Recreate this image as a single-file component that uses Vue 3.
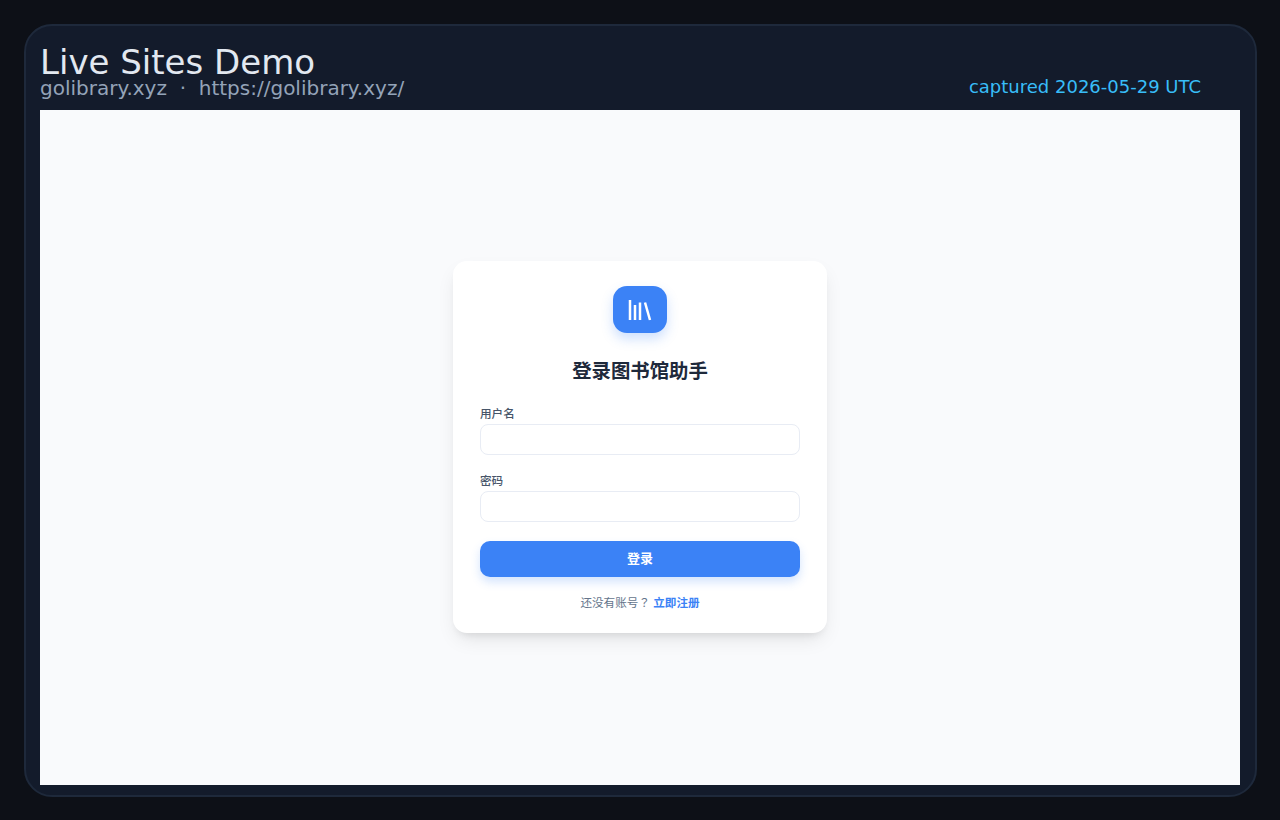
<template>
  <div class="page">
    <div class="frame">
      <header class="head">
        <div class="head__left">
          <h1 class="head__title">Live Sites Demo</h1>
          <p class="head__sub">golibrary.xyz &nbsp;·&nbsp; https://golibrary.xyz/</p>
        </div>
        <span class="head__stamp">captured 2026-05-29 UTC</span>
      </header>

      <main class="shot">
        <form class="card" @submit.prevent>
          <div class="card__logo">
            <svg width="30" height="30" viewBox="0 0 24 24" fill="none" stroke="#fff" stroke-width="2" stroke-linecap="butt" stroke-linejoin="round">
              <path d="m16 6 4 14" />
              <path d="M12 6v14" />
              <path d="M8 8v12" />
              <path d="M4 4v16" />
            </svg>
          </div>
          <h2 class="card__title">登录图书馆助手</h2>

          <label v-for="f in fields" :key="f.label" class="field">
            <span class="field__label">{{ f.label }}</span>
            <input class="field__input" :type="f.type" />
          </label>

          <button class="card__btn" type="submit">登录</button>
          <p class="card__foot">还没有账号<span class="card__q">？</span> <a class="card__link">立即注册</a></p>
        </form>
      </main>
    </div>
  </div>
</template>

<script setup>
const fields = [
  { label: '用户名', type: 'text' },
  { label: '密码', type: 'password' },
]
</script>

<style>
html, body { margin: 0; background: #0d1017; }
</style>

<style scoped>
.page {
  box-sizing: border-box;
  width: 1280px;
  height: 820px;
  padding: 24px 23px 23px 24px;
  background: #0d1017;
}
.frame {
  box-sizing: border-box;
  height: 100%;
  display: flex;
  flex-direction: column;
  padding: 0 15px 10px 14px;
  background: #131b2b;
  border: 2px solid #1e293b;
  border-radius: 28px;
}

/* Header */
.head {
  height: 84px;
  flex-shrink: 0;
  display: flex;
  justify-content: space-between;
  align-items: flex-end;
  font-family: "DejaVu Sans", sans-serif;
}
.head__title {
  margin: 0;
  font-size: 34px;
  line-height: 30px;
  font-weight: 400;
  color: #e2e8f0;
}
.head__sub {
  margin: 0 0 11px;
  font-size: 20px;
  line-height: 22px;
  color: #94a3b8;
}
.head__stamp {
  margin: 0 39px 12px 0;
  font-size: 18px;
  line-height: 22px;
  color: #38bdf8;
}

/* Screenshot area */
.shot {
  flex: 1;
  display: flex;
  justify-content: center;
  align-items: flex-start;
  padding-top: 151px;
  background: #f9fafc;
}
.card {
  box-sizing: border-box;
  width: 374px;
  height: 372px;
  padding: 25px 27px 0;
  display: flex;
  flex-direction: column;
  background: #fff;
  border-radius: 14px;
  box-shadow: 0 9px 20px -4px rgba(0, 0, 0, 0.1), 0 6px 8px -5px rgba(0, 0, 0, 0.1);
  font-family: "Liberation Sans", "Noto Sans CJK SC", sans-serif;
}
.card__logo {
  width: 54px;
  height: 47px;
  margin: 0 auto;
  display: flex;
  align-items: center;
  justify-content: center;
  background: #3b82f6;
  border-radius: 14px;
  box-shadow: 0 6px 12px rgba(59, 130, 246, 0.25);
}
.card__title {
  margin: 27px 0 0;
  font-size: 19.4px;
  line-height: 22px;
  font-weight: 700;
  text-align: center;
  color: #1e293b;
}

.field { display: flex; flex-direction: column; margin-top: 19px; }
.card__title + .field { margin-top: 25px; }
.field__label {
  font-size: 11.6px;
  line-height: 14px;
  font-weight: 500;
  color: #475569;
  margin-bottom: 3px;
}
.field__input {
  box-sizing: border-box;
  height: 31px;
  padding: 0 10px;
  background: #fff;
  border: 1px solid #e8ecf4;
  border-radius: 8px;
  outline: none;
}

.card__btn {
  height: 36px;
  margin-top: 19px;
  padding: 0 0 3px;
  background: #3b82f6;
  border: none;
  border-radius: 10px;
  font-family: inherit;
  font-size: 13px;
  font-weight: 700;
  color: #fff;
  box-shadow: 0 5px 10px rgba(59, 130, 246, 0.22);
  cursor: pointer;
}
.card__foot {
  margin: 18px 0 0;
  font-size: 11.6px;
  line-height: 14px;
  text-align: center;
  color: #64748b;
}
.card__q { font-family: "Noto Sans CJK TC", sans-serif; }
.card__link { font-weight: 700; color: #3b82f6; }
</style>
